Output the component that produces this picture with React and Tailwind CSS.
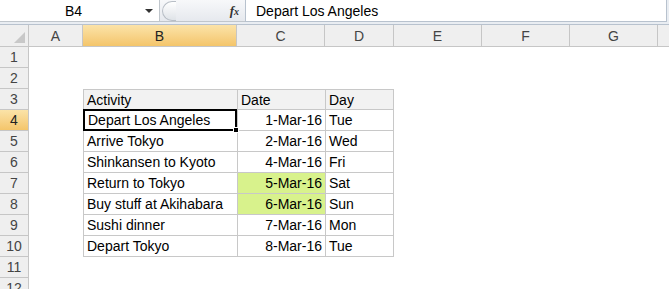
import React from "react";

const cols = [
  { name: "A", w: "w-[54px]" },
  { name: "B", w: "w-[154px]", active: true },
  { name: "C", w: "w-[88px]" },
  { name: "D", w: "w-[69px]" },
  { name: "E", w: "w-[88px]" },
  { name: "F", w: "w-[88px]" },
  { name: "G", w: "w-[88px]" },
];

const rows = [
  ["Depart Los Angeles", "1-Mar-16", "Tue"],
  ["Arrive Tokyo", "2-Mar-16", "Wed"],
  ["Shinkansen to Kyoto", "4-Mar-16", "Fri"],
  ["Return to Tokyo", "5-Mar-16", "Sat", true],
  ["Buy stuff at Akihabara", "6-Mar-16", "Sun", true],
  ["Sushi dinner", "7-Mar-16", "Mon"],
  ["Depart Tokyo", "8-Mar-16", "Tue"],
];

function RowHead({ n, active }) {
  return (
    <div
      className={
        "w-[29px] h-full flex items-center justify-center border-r border-b border-[#c6c6c6] shrink-0 " +
        (active
          ? "bg-gradient-to-b from-[#fbe3a8] to-[#f4c56a] text-[#222]"
          : "bg-[#efefef] text-[#444]")
      }
    >
      {n}
    </div>
  );
}

export default function App() {
  return (
    <div className="w-[669px] h-[289px] overflow-hidden bg-white text-[14px] leading-none text-black font-['Liberation_Sans',Arial,sans-serif]">
      {/* Formula bar */}
      <div className="h-[25px] bg-[#e9edf2] flex items-start border-b border-[#b8c2ce]">
        <div className="w-[160px] h-[22px] bg-white border-r border-b border-[#c0c6cc] flex items-center relative">
          <span className="flex-1 text-center pl-[2px] text-[14px]">B4</span>
          <span className="mr-[6px] w-0 h-0 border-l-[4px] border-r-[4px] border-t-[4px] border-l-transparent border-r-transparent border-t-[#333]" />
        </div>
        <div className="h-[22px] w-[85px] flex items-center bg-gradient-to-b from-[#f7f8fa] to-[#e6e9ee] border-b border-[#c0c6cc]">
          <div className="ml-[2px] w-[14px] h-[20px] rounded-l-full border border-r-0 border-[#b8bec6] bg-gradient-to-b from-[#ffffff] to-[#dfe3e8]" />
          <span className="ml-auto mr-[6px] italic font-bold text-[13px] font-['Liberation_Serif',serif] text-[#333]">
            f<span className="text-[10px]">x</span>
          </span>
        </div>
        <div className="w-[422px] h-[22px] bg-white border border-t-0 border-[#b8c2ce] flex items-center pl-[10px]">
          Depart Los Angeles
        </div>
      </div>

      {/* Column headers */}
      <div className="h-[22px] flex bg-[#efefef] border-b border-[#c6c6c6]">
        <div className="w-[29px] h-full border-r border-[#c6c6c6] relative shrink-0">
          <div className="absolute right-[3px] bottom-[3px] w-0 h-0 [border-bottom:11px_solid_#c8c8c8] [border-left:11px_solid_transparent]" />
        </div>
        {cols.map((c) => (
          <div
            key={c.name}
            className={
              c.w +
              " h-full shrink-0 flex items-center justify-center border-r border-[#c6c6c6] " +
              (c.active
                ? "bg-gradient-to-b from-[#fbe3a8] to-[#f4c56a] text-[#222]"
                : "text-[#444]")
            }
          >
            {c.name}
          </div>
        ))}
        <div className="flex-1" />
      </div>

      {/* Rows 1-2 */}
      {[1, 2].map((n) => (
        <div key={n} className="h-[21px] flex">
          <RowHead n={n} />
        </div>
      ))}

      {/* Row 3 header */}
      <div className="h-[21px] flex">
        <RowHead n={3} />
        <div className="w-[54px] shrink-0" />
        <div className="w-[154px] shrink-0 bg-[#f2f2f2] border border-r-0 border-[#c8c8c8] flex items-center pl-[3px]">
          Activity
        </div>
        <div className="w-[88px] shrink-0 bg-[#f2f2f2] border border-r-0 border-[#c8c8c8] flex items-center pl-[3px]">
          Date
        </div>
        <div className="w-[69px] shrink-0 bg-[#f2f2f2] border border-[#c8c8c8] flex items-center pl-[3px]">
          Day
        </div>
      </div>

      {rows.map(([act, date, day, hl], i) => (
        <div key={i} className="h-[21px] flex">
          <RowHead n={i + 4} active={i === 0} />
          <div className="w-[54px] shrink-0" />
          <div
            className={
              "w-[154px] shrink-0 flex items-center pl-[3px] relative " +
              (i === 0
                ? "border-2 border-black -mt-[1px] h-[22px]"
                : "border-l border-b border-[#c8c8c8]")
            }
          >
            {act}
            {i === 0 && (
              <div className="absolute -right-[4px] -bottom-[4px] w-[6px] h-[6px] bg-black border border-white" />
            )}
          </div>
          <div
            className={
              "w-[88px] shrink-0 flex items-center justify-end pr-[3px] border-l border-b border-[#c8c8c8] " +
              (hl ? "bg-[#d8f28c]" : "")
            }
          >
            {date}
          </div>
          <div className="w-[69px] shrink-0 flex items-center pl-[3px] border-l border-r border-b border-[#c8c8c8]">
            {day}
          </div>
        </div>
      ))}

      {[11, 12].map((n) => (
        <div key={n} className="h-[21px] flex">
          <RowHead n={n} />
        </div>
      ))}
    </div>
  );
}
